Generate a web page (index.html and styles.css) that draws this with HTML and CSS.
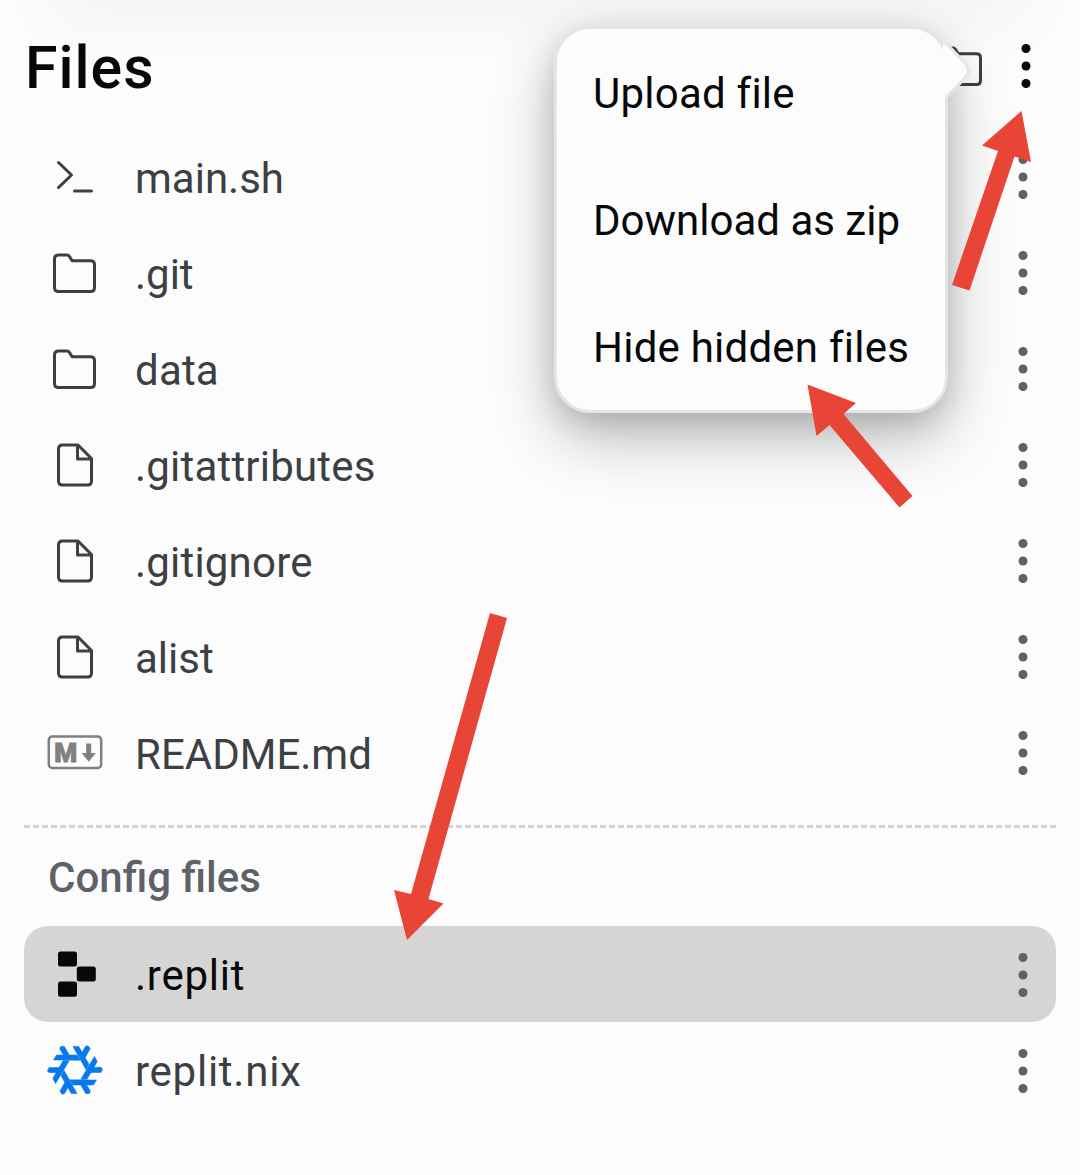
FILE: index.html
```html
<!DOCTYPE html>
<html lang="en">
<head>
<meta charset="utf-8">
<title>Files</title>
<link rel="stylesheet" href="styles.css">
</head>
<body>
<svg class="defs" width="0" height="0" aria-hidden="true">
  <symbol id="folder" viewBox="0 0 56 56"><path d="M11.500 10h8.500q1.600 0 2.500 1.500l2.600 4.300h18.400q4 0 4 4v22.700q0 4-4 4h-32q-4 0-4-4V14q0-4 4-4z"/></symbol>
  <symbol id="file" viewBox="0 0 56 56"><path d="M15.500 8h15.500L44.500 21.500V44q0 4-4 4h-25q-4 0-4-4V12q0-4 4-4zM30.500 8.500v13.500h13.500"/></symbol>
  <symbol id="dots" viewBox="0 0 12 48"><circle cx="6" cy="6.500" r="4.500"/><circle cx="6" cy="24" r="4.500"/><circle cx="6" cy="41.500" r="4.500"/></symbol>
</svg>
<main class="app">
  <header class="header">
    <h1 class="title">Files</h1>
    <div class="tools">
      <svg class="icon line"><use href="#folder"/></svg>
      <svg class="dots dark"><use href="#dots"/></svg>
    </div>
  </header>
  <ul class="list">
    <li class="row"><svg class="icon line" viewBox="0 0 56 56"><path d="M11.500 13.500l13 12.500-13 12.500M27.500 42h17"/></svg><span class="name tight">main.sh</span><svg class="dots"><use href="#dots"/></svg></li>
    <li class="row"><svg class="icon line"><use href="#folder"/></svg><span class="name tight">.git</span><svg class="dots"><use href="#dots"/></svg></li>
    <li class="row"><svg class="icon line"><use href="#folder"/></svg><span class="name">data</span><svg class="dots"><use href="#dots"/></svg></li>
    <li class="row"><svg class="icon line"><use href="#file"/></svg><span class="name">.gitattributes</span><svg class="dots"><use href="#dots"/></svg></li>
    <li class="row"><svg class="icon line"><use href="#file"/></svg><span class="name">.gitignore</span><svg class="dots"><use href="#dots"/></svg></li>
    <li class="row"><svg class="icon line"><use href="#file"/></svg><span class="name tight">alist</span><svg class="dots"><use href="#dots"/></svg></li>
    <li class="row"><svg class="icon markdown" viewBox="0 0 56 56"><rect x="1.800" y="11.500" width="52.400" height="31.500" rx="3.500"/><text x="7.200" y="36.600" textLength="23" lengthAdjust="spacingAndGlyphs">M</text><path d="M39.200 18.500h5v9.500h4.600l-7.100 8.800-7.100-8.800h4.600z"/></svg><span class="name tight">README.md</span><svg class="dots"><use href="#dots"/></svg></li>
  </ul>
  <div class="divider"></div>
  <h2 class="section">Config files</h2>
  <ul class="list config">
    <li class="row selected"><svg class="icon" viewBox="0 0 56 56"><rect x="11" y="5.400" width="19" height="15.200" rx="2.500"/><rect x="29.800" y="20.600" width="19" height="15" rx="2.500"/><rect x="11" y="35.500" width="19" height="15.200" rx="2.500"/></svg><span class="name loose">.replit</span><svg class="dots"><use href="#dots"/></svg></li>
    <li class="row"><svg class="icon nix" viewBox="-28 -28 56 56">
      <g id="arm"><path d="M-21.500-10l3-5H2L5.200-9.700z"/><path d="M-15-20.500q-.8-3.200 2-3.200h2.200l5.700 9.700h-6z"/></g>
      <use href="#arm" transform="rotate(60)"/><use href="#arm" transform="rotate(120)"/><use href="#arm" transform="rotate(180)"/><use href="#arm" transform="rotate(240)"/><use href="#arm" transform="rotate(300)"/>
    </svg><span class="name loose">replit.nix</span><svg class="dots"><use href="#dots"/></svg></li>
  </ul>
  <div class="menu">
    <div class="item wide">Upload file</div>
    <div class="item">Download as zip</div>
    <div class="item wide">Hide hidden files</div>
    <svg class="caret" viewBox="0 0 32 60"><path class="fill" d="M0 3h4L24 24q6 6.500 0 13L4 57H0z"/><path class="edge" d="M3 2L22 22q7 7.500 0 15L3.500 56"/></svg>
  </div>
  <svg class="arrows" viewBox="0 0 1080 1175">
    <path d="M1021.500 111L1031 162l-16.500-5.500-45 134-17.500-5.500 46-134-16-5.500z"/>
    <path d="M807.500 384.500L856 403l-12.500 11 69 82-13 11.500-70-82.500-13 11z"/>
    <path d="M490 613l17 5-78.500 281 15 4.500L407 940l-13-50 17 4z"/>
  </svg>
</main>
</body>
</html>
```
FILE: styles.css
```css
* { box-sizing: border-box; }
body { margin: 0; background: #fcfcfd; font-family: Roboto, "Liberation Sans", sans-serif; }
h1, h2, ul { margin: 0; padding: 0; }
.defs { position: absolute; }
.app { position: relative; height: 1175px; overflow: hidden; padding: 0 24px; background: #fcfcfc; }
.app::before {
  content: ""; position: absolute; left: 50px; right: 50px; top: -40px; height: 40px;
  box-shadow: 0 12px 64px rgba(0, 0, 0, .06);
}
.header { position: relative; display: flex; align-items: center; justify-content: space-between; height: 129px; }
.title { align-self: flex-start; padding: 33px 0 0 1px; font-size: 59px; line-height: 69px; font-weight: 500; letter-spacing: 1px; color: #07080a; }
.tools { display: flex; align-self: flex-start; align-items: center; gap: 31px; padding: 38px 24px 0 0; }
.icon { flex: none; width: 56px; height: 56px; fill: #07080a; }
.line { fill: none; stroke: #3c3f44; stroke-width: 3; stroke-linecap: round; stroke-linejoin: round; }
.list { position: relative; list-style: none; }
.row { display: flex; align-items: center; height: 96px; padding: 0 27px 0 23px; border-radius: 24px; color: #3c3f44; }
.name { flex: 1; padding: 4px 0 0 32px; font-size: 42px; line-height: 50px; letter-spacing: .2px; }
.tight { letter-spacing: 0; }
.loose { letter-spacing: .75px; }
.dots { flex: none; width: 12px; height: 48px; fill: #5f6168; }
.dark { fill: #07080a; }
.markdown { fill: #808080; }
.markdown rect { fill: none; stroke: #808080; stroke-width: 2.500px; }
.markdown text { font-size: 25px; font-weight: 900; stroke: #808080; stroke-width: .8px; }
.nix { fill: #0779ed; stroke: #0779ed; stroke-width: .5px; }
.divider { height: 3px; margin-top: 24px; background: repeating-linear-gradient(90deg, #d3d3d3 0 6px, transparent 6px 9px); }
.section { height: 98px; padding: 1px 0 0 24px; font-size: 42px; line-height: 98px; font-weight: 500; color: #5f6168; }
.selected { background: #d5d5d5; color: #07080a; }
.config .dots { margin-top: 2px; }
.menu {
  position: absolute; left: 554px; top: 26px; width: 394px; height: 387px;
  padding: 1px 36px 0; border: 3px solid #e4e5e6; border-radius: 36px; background: #fcfcfc;
  box-shadow: 0 24px 60px rgba(0, 0, 0, .27), 0 8px 28px rgba(0, 0, 0, .12);
}
.item { height: 127px; font-size: 42px; line-height: 127px; white-space: nowrap; color: #07080a; }
.wide { letter-spacing: .23px; }
.caret { position: absolute; left: 386px; top: 12px; width: 32px; height: 60px; }
.caret .fill { fill: #fcfcfc; }
.caret .edge { fill: none; stroke: #e4e5e6; stroke-width: 3; }
.arrows { position: absolute; left: 0; top: 0; width: 1080px; height: 1175px; fill: #e94537; pointer-events: none; }
```
